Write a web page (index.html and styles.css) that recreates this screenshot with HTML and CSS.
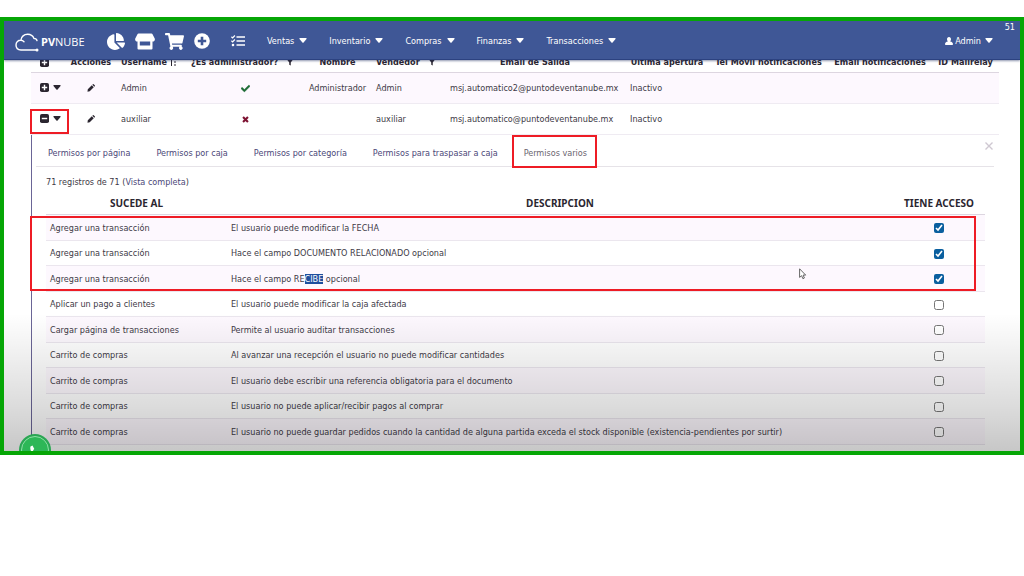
FILE: index.html
```html
<!DOCTYPE html>
<html lang="es">
<head>
<meta charset="utf-8">
<title>PVNube - Usuarios</title>
<link rel="stylesheet" href="styles.css">
</head>
<body>
<svg class="defs" aria-hidden="true">
  <symbol id="plus-box" viewBox="0 0 10 10"><rect width="10" height="10" rx="2"/><path d="M5 2v6M2 5h6" stroke="#fff" stroke-width="1.6"/></symbol>
  <symbol id="minus-box" viewBox="0 0 10 10"><rect width="10" height="10" rx="2"/><path d="M2 5h6" stroke="#fff" stroke-width="1.6"/></symbol>
  <symbol id="caret" viewBox="0 0 8 5"><path d="M1 0h6q1 0 .5 1L4.6 4.4q-.6.6-1.2 0L.5 1Q0 0 1 0z"/></symbol>
  <symbol id="funnel" viewBox="0 0 8 8"><path d="M0 0h8L5 4v4L3 7V4z"/></symbol>
  <symbol id="pencil" viewBox="0 0 10 10"><path d="M6 1.6 8.4 4 3.4 9 .6 9.6 1 6.6zM6.700.9l.6-.6q.5-.5 1 0l1.400 1.400q.5.500 0 1l-.6.6z"/></symbol>
  <symbol id="check" viewBox="0 0 512 512"><path stroke="currentColor" stroke-width="24" d="M173.898 439.404l-166.4-166.4c-9.997-9.997-9.997-26.206 0-36.204l36.203-36.204c9.997-9.998 26.207-9.998 36.204 0L192 312.69 432.095 72.596c9.997-9.997 26.207-9.997 36.204 0l36.203 36.204c9.997 9.997 9.997 26.206 0 36.204l-294.4 294.401c-9.998 9.997-26.207 9.997-36.204-.001z"/></symbol>
  <symbol id="cross" viewBox="0 0 8 8"><path d="M1.200 1.200l5.600 5.600M6.800 1.200L1.200 6.800" stroke="currentColor" stroke-width="2.400"/></symbol>
</svg>

<div class="frame">
  <header class="navbar">
    <a class="brand" href="#">
      <svg width="24" height="19" viewBox="0 0 24 19" fill="none" stroke="#fff" stroke-width="1.400" stroke-linecap="round"><path d="M21 17H6C2.500 17 1 14.500 1 12c0-3 2.200-4.800 4.800-4.700C6.500 3.500 9.300 1.200 12.700 1.200c3.400 0 5.300 1.800 6.300 4.200M5.800 7.300c1.400 0 2.400.5 3.200 1.400M19 5.400c1.700 0 2.700.9 3 2.200"/><circle cx="22" cy="17" r=".8" fill="#fff"/></svg>
      <span><b>PV</b>NUBE</span>
    </a>
    <nav class="shortcuts">
      <a href="#" aria-label="Reportes"><svg width="18" height="17" viewBox="0 0 544 512"><path d="M527.79 288H290.5l158.03 158.03c6.04 6.04 15.98 6.53 22.19.68 38.7-36.46 65.32-85.61 73.13-140.86 1.34-9.46-6.51-17.85-16.06-17.85zm-15.83-64.8C503.72 103.74 408.26 8.28 288.8.04 279.68-.59 272 7.1 272 16.24V240h223.77c9.14 0 16.82-7.68 16.19-16.8zM224 288V50.71c0-9.55-8.39-17.4-17.84-16.06C86.99 51.49-4.1 155.6.14 280.37 4.5 408.51 114.83 513.59 243.03 511.98c50.4-.63 96.97-16.87 135.26-44.03 7.9-5.6 8.42-17.23 1.57-24.08L224 288z"/></svg></a>
      <a href="#" aria-label="Tienda"><svg width="20" height="17" viewBox="0 0 20 17"><path fill-rule="evenodd" d="M3.500.5h13q.6 0 .9.500l2.200 4.200c.8 1.700-.2 3.300-2 3.300h-.1V15.500q0 1-1 1h-13q-1 0-1-1V8.500h-.1c-1.800 0-2.800-1.600-2-3.300L2.600 1q.3-.5.9-.5zM4.800 8.500V12.500h10.400V8.500z"/></svg></a>
      <a href="#" aria-label="Carrito"><svg width="19" height="17" viewBox="0 0 576 512"><path d="M528.12 301.319l47.273-208C578.806 78.301 567.391 64 551.99 64H159.208l-9.166-44.81C147.758 8.021 137.93 0 126.529 0H24C10.745 0 0 10.745 0 24v16c0 13.255 10.745 24 24 24h69.883l70.248 343.435C147.325 417.1 136 435.222 136 456c0 30.928 25.072 56 56 56s56-25.072 56-56c0-15.674-6.447-29.835-16.824-40h209.647C430.447 426.165 424 440.326 424 456c0 30.928 25.072 56 56 56s56-25.072 56-56c0-22.172-12.888-41.332-31.579-50.405l5.517-24.276c3.413-15.018-8.002-29.319-23.403-29.319H218.117l-6.545-32h293.145c11.206 0 20.92-7.754 23.403-18.681z"/></svg></a>
      <a href="#" aria-label="Agregar"><svg width="16" height="16" viewBox="0 0 16 16"><circle cx="8" cy="8" r="7.800"/><path d="M8 3.800v8.400M3.800 8h8.400" stroke="#3f5796" stroke-width="2.600"/></svg></a>
      <a class="tasks" href="#" aria-label="Tareas"><svg width="14" height="12" viewBox="0 0 14 12" fill="none" stroke="#fff" stroke-width="1.400"><path d="M5.500 2H14M5.500 6H14M5.500 10H14"/><path d="M.4 1.800l1.200 1.100L3.900.5M.4 5.800l1.200 1.100L3.900 4.500" stroke-width="1.200"/><circle cx="2" cy="10" r=".6"/></svg></a>
    </nav>
    <nav class="menus">
      <button>Ventas <svg class="caret"><use href="#caret"/></svg></button>
      <button>Inventario <svg class="caret"><use href="#caret"/></svg></button>
      <button>Compras <svg class="caret"><use href="#caret"/></svg></button>
      <button>Finanzas <svg class="caret"><use href="#caret"/></svg></button>
      <button>Transacciones <svg class="caret"><use href="#caret"/></svg></button>
    </nav>
    <button class="account"><svg width="8" height="8" viewBox="0 0 8 8"><path d="M4 0c1.300 0 2 1 2 2.300 0 .9-.4 1.700-.9 2.200C7 4.900 8 5.600 8 7.200q0 .8-.8.8H.8Q0 8 0 7.200c0-1.600 1-2.300 2.900-2.700C2.400 4 2 3.200 2 2.300 2 1 2.700 0 4 0z"/></svg>Admin <svg class="caret"><use href="#caret"/></svg></button>
    <span class="counter">51</span>
  </header>

  <main class="content">
    <table class="users">
      <colgroup><col class="w-expand"><col class="w-actions"><col class="w-user"><col class="w-admin"><col class="w-name"><col class="w-seller"><col class="w-email"><col class="w-last"><col class="w-tel"><col class="w-notif"><col class="w-relay"></colgroup>
      <thead>
        <tr>
          <th class="left"><svg class="box"><use href="#plus-box"/></svg></th>
          <th>Acciones</th>
          <th class="left">Username <svg width="6" height="8" viewBox="0 0 6 8" fill="none" stroke="currentColor"><path d="M1.500 0v8M4 1h2M4 4h2M4 7h2"/></svg></th>
          <th class="left">¿Es administrador? <svg class="funnel"><use href="#funnel"/></svg></th>
          <th>Nombre</th>
          <th class="left">Vendedor <svg class="funnel"><use href="#funnel"/></svg></th>
          <th>Email de Salida</th>
          <th>Ultima apertura</th>
          <th>Tel Movil notificaciones</th>
          <th>Email notificaciones</th>
          <th>ID Mailrelay</th>
        </tr>
      </thead>
      <tbody>
        <tr>
          <td><button class="expander" aria-label="Expandir"><svg class="box"><use href="#plus-box"/></svg><svg class="caret"><use href="#caret"/></svg></button></td>
          <td class="mid"><button aria-label="Editar"><svg class="pencil"><use href="#pencil"/></svg></button></td>
          <td>Admin</td>
          <td class="mid"><svg class="yes"><use href="#check"/></svg></td>
          <td class="mid">Administrador</td>
          <td>Admin</td>
          <td>msj.automatico2@puntodeventanube.mx</td>
          <td>Inactivo</td><td></td><td></td><td></td>
        </tr>
        <tr>
          <td class="marked"><button class="expander" aria-label="Contraer"><svg class="box"><use href="#minus-box"/></svg><svg class="caret"><use href="#caret"/></svg></button></td>
          <td class="mid"><button aria-label="Editar"><svg class="pencil"><use href="#pencil"/></svg></button></td>
          <td>auxiliar</td>
          <td class="mid"><svg class="no"><use href="#cross"/></svg></td>
          <td></td>
          <td>auxiliar</td>
          <td>msj.automatico@puntodeventanube.mx</td>
          <td>Inactivo</td><td></td><td></td><td></td>
        </tr>
      </tbody>
    </table>

    <section class="detail">
      <div class="tabs">
        <a href="#">Permisos por página</a>
        <a href="#">Permisos por caja</a>
        <a href="#">Permisos por categoría</a>
        <a href="#">Permisos para traspasar a caja</a>
        <a class="active" href="#">Permisos varios</a>
        <button class="close" aria-label="Cerrar"><svg width="8" height="8" viewBox="0 0 8 8" fill="none" stroke="currentColor" stroke-width="1.400"><path d="M.5.5l7 7M7.500.5l-7 7"/></svg></button>
      </div>
      <p class="summary">71 registros de 71 (<a href="#">Vista completa</a>)</p>
      <div class="permissions-wrap">
        <table class="permissions">
          <colgroup><col class="w-when"><col><col class="w-access"></colgroup>
          <thead><tr><th>SUCEDE AL</th><th>DESCRIPCION</th><th>TIENE ACCESO</th></tr></thead>
          <tbody>
            <tr><td>Agregar una transacción</td><td><label for="p1">El usuario puede modificar la FECHA</label></td><td><input type="checkbox" id="p1" checked></td></tr>
            <tr><td>Agregar una transacción</td><td><label for="p2">Hace el campo DOCUMENTO RELACIONADO opcional</label></td><td><input type="checkbox" id="p2" checked></td></tr>
            <tr><td>Agregar una transacción</td><td><label for="p3">Hace el campo RE<span class="selected">CIBE</span> opcional</label></td><td><input type="checkbox" id="p3" checked></td></tr>
            <tr><td>Aplicar un pago a clientes</td><td><label for="p4">El usuario puede modificar la caja afectada</label></td><td><input type="checkbox" id="p4"></td></tr>
            <tr><td>Cargar página de transacciones</td><td><label for="p5">Permite al usuario auditar transacciones</label></td><td><input type="checkbox" id="p5"></td></tr>
            <tr><td>Carrito de compras</td><td><label for="p6">Al avanzar una recepción el usuario no puede modificar cantidades</label></td><td><input type="checkbox" id="p6"></td></tr>
            <tr><td>Carrito de compras</td><td><label for="p7">El usuario debe escribir una referencia obligatoria para el documento</label></td><td><input type="checkbox" id="p7"></td></tr>
            <tr><td>Carrito de compras</td><td><label for="p8">El usuario no puede aplicar/recibir pagos al comprar</label></td><td><input type="checkbox" id="p8"></td></tr>
            <tr><td>Carrito de compras</td><td><label for="p9">El usuario no puede guardar pedidos cuando la cantidad de alguna partida exceda el stock disponible (existencia-pendientes por surtir)</label></td><td><input type="checkbox" id="p9"></td></tr>
          </tbody>
        </table>
        <span class="mark-rows"></span>
        <svg class="pointer" width="8" height="12" viewBox="0 0 8 12"><path d="M.6.8v8.600l2-1.700 1.300 3 1.500-.7-1.300-2.900h2.600z" fill="#fff" stroke="#555" stroke-width=".9"/></svg>
      </div>
    </section>
  </main>

  <button class="phone" aria-label="Llamar"><svg width="32" height="32" viewBox="0 0 32 32"><circle cx="16" cy="16" r="16" fill="#2aa653"/><circle cx="16" cy="16" r="13.500" fill="#2db757" stroke="#8fe0a6"/><path d="M11.500 12.500l2-1 1.800 3.500-1.300 1.300c.8 1.800 2 3 3.700 3.700l1.300-1.300 3.500 1.800-1 2c-5 1.500-11.500-5-10-10z" fill="#fff"/></svg></button>
</div>
</body>
</html>
```
FILE: styles.css
```css
* { box-sizing: border-box; }

body {
  margin: 0;
  background: #fff;
  color: #403a46;
  font: 9px/14px "DejaVu Sans Condensed", "DejaVu Sans", sans-serif;
}

a { color: inherit; text-decoration: none; }

button {
  padding: 0;
  border: 0;
  background: none;
  color: inherit;
  font: inherit;
}

svg { display: inline-block; vertical-align: middle; }
svg:not([fill]) { fill: currentColor; }
.defs { position: absolute; width: 0; height: 0; }

.frame {
  position: relative;
  margin-top: 17px;
  border: 4px solid #06a606;
  overflow: hidden;
}

.frame::after {
  content: "";
  position: absolute;
  inset: 0;
  background: linear-gradient(transparent 68%, rgba(0, 0, 0, .05) 76%, rgba(0, 0, 0, .14) 90%, rgba(0, 0, 0, .22));
  pointer-events: none;
}

/* Top bar */
.navbar {
  position: relative;
  z-index: 1;
  display: flex;
  align-items: center;
  height: 39px;
  padding: 0 27px 0 11px;
  background: #3f5796;
  border-bottom: 1px solid #2c4280;
  box-shadow: 0 1px 2px rgba(30, 45, 95, .5);
  color: #fff;
}

.brand {
  display: flex;
  align-items: center;
  gap: 2px;
  width: 92px;
  padding-top: 4px;
  font: 11px/14px "Open Sans", sans-serif;
}

.shortcuts { display: flex; align-items: center; gap: 10px; padding-top: 2px; }
.shortcuts a { display: flex; }
.shortcuts .tasks { margin-left: 11px; }
.menus { display: flex; gap: 22px; margin-left: 22px; padding-top: 1px; }
.menus button, .account { display: flex; align-items: center; }
.caret { width: 8px; height: 5px; }
.menus .caret { margin-left: 5px; }
.account .caret { margin-left: 2px; }
.account { margin-left: auto; gap: 2px; padding-top: 1px; }
.counter { position: absolute; top: 0; right: 5px; line-height: 13px; }

/* User list */
.content { margin: -12px 21px 0 27px; }
table { width: 100%; border-collapse: collapse; table-layout: fixed; }
th, td { padding: 0; text-align: left; white-space: nowrap; }
th { color: #2b2630; text-align: center; }
.users th.left { text-align: left; }
.users .mid { text-align: center; }
.users th { height: 24px; padding-top: 4px; border-bottom: 1px solid #ddd6e0; }
.users td { height: 31px; border-bottom: 1px solid #efebf2; }
.users tbody tr:nth-child(odd) { background: #fdf8fe; }
.users th:nth-child(1), .users td:nth-child(1) { padding-left: 9px; }
.users th:nth-child(3), .users td:nth-child(3),
.users th:nth-child(4) { padding-left: 5px; }
.users th:nth-child(6), .users td:nth-child(6),
.users td:nth-child(7), .users td:nth-child(8) { padding-left: 5px; }

.w-expand { width: 35px; }
.w-actions { width: 50px; }
.w-user { width: 70px; }
.w-admin { width: 118px; }
.w-name { width: 67px; }
.w-seller { width: 74px; }
.w-email { width: 180px; }
.w-last { width: 84px; }
.w-tel { width: 119px; }
.w-notif { width: 104px; }
.w-relay { width: 67px; }

.expander { display: flex; align-items: center; gap: 4px; color: #2b2630; }
.box { width: 9px; height: 9px; }
.funnel { width: 6px; height: 7px; margin-left: 6px; }
.pencil { width: 8px; height: 8px; color: #2b2630; }
.yes { width: 9px; height: 9px; color: #1c6b34; }
.no { width: 7px; height: 7px; color: #7d1232; }

.marked { position: relative; }
.marked::after {
  content: "";
  position: absolute;
  inset: 5px -3px 0 -1px;
  border: 2px solid #ee1c25;
}

/* Expanded permissions */
.detail {
  padding: 0 5px 6px 4px;
  border-left: 1px solid #6a6596;
}

.tabs {
  display: flex;
  gap: 2px;
  height: 32px;
  border-bottom: 1px solid #e6e3e8;
  color: #4b4878;
}

.tabs a { position: relative; padding: 11px 12px 0; }
.tabs .active { color: #6b6670; }
.tabs .active::after {
  content: "";
  position: absolute;
  inset: 0 2px -2px 0;
  border: 2px solid #ee1c25;
}

.close { align-self: flex-start; margin: 4px 1px 0 auto; color: #cfc8d2; }
.summary { margin: 8px 10px 0; }
.summary a { color: #4b4878; }
.permissions-wrap { position: relative; margin: 1px 9px 0 10px; }
.w-when { width: 181px; }
.w-access { width: 92px; }

.permissions th {
  height: 25px;
  padding-top: 2px;
  border-bottom: 1px solid #ddd6e0;
  font: bold 10px/14px "Noto Sans", sans-serif;
}

.permissions td { height: 26px; padding-left: 4px; border-bottom: 1px solid #ebe6ee; }
.permissions tr:nth-child(even) td { height: 25px; }
.permissions tbody tr:nth-child(odd) { background: #fdf8fe; }
.permissions td:nth-child(3) { padding: 0; text-align: center; }

.permissions input {
  width: 10px;
  height: 10px;
  margin: 0;
  accent-color: #0a5f9f;
  vertical-align: middle;
}

.selected { background: #1f4f9e; color: #fff; }

.mark-rows {
  position: absolute;
  inset: 26px 9px auto -16px;
  height: 75px;
  border: 2px solid #ee1c25;
}

.pointer { position: absolute; left: 80%; top: 78px; margin-left: 2px; }

.phone {
  position: absolute;
  left: 15px;
  bottom: -15px;
  z-index: 1;
  display: flex;
}
```
